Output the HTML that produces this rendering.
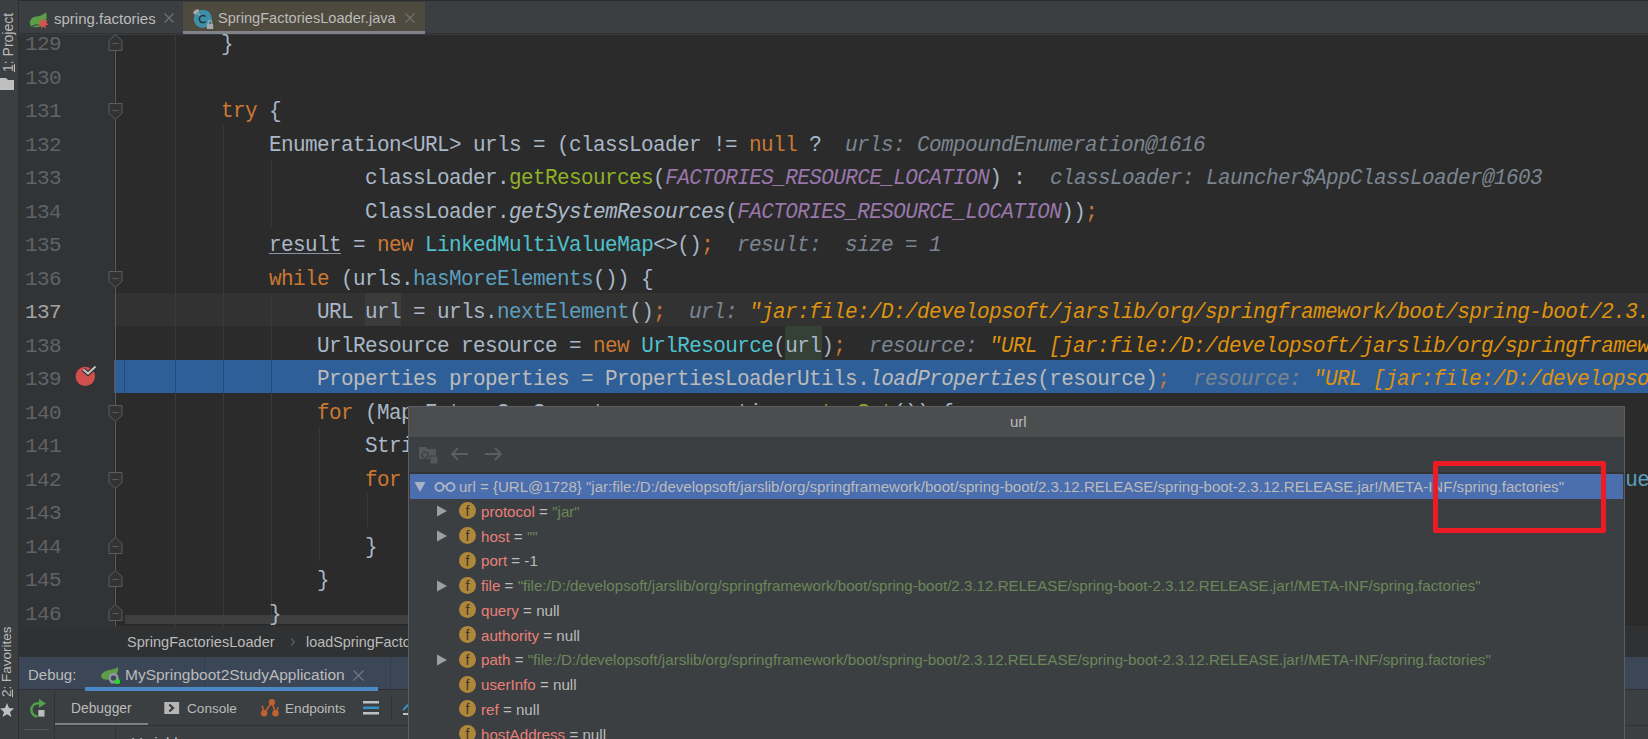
<!DOCTYPE html>
<html><head><meta charset="utf-8">
<style>
*{margin:0;padding:0;box-sizing:border-box}
html,body{width:1648px;height:739px;overflow:hidden;background:#2b2b2b}
body{position:relative;font-family:"Liberation Sans",sans-serif}
.abs{position:absolute}
.mono{font-family:"Liberation Mono",monospace;font-size:21px;letter-spacing:-0.6px;white-space:pre}
.ln{position:absolute;left:0;width:1648px;height:34px;line-height:40px}
.code{position:absolute;left:125px;top:0;color:#a9b7c6}
.hint{position:absolute;top:0}
.num{position:absolute;left:25px;top:0;color:#606366}
.num.cur{color:#a4a3a3}
.k{color:#cc7832}
.g{color:#8fb027}
.m{color:#5b9ebd}
.c{color:#4fc1cd}
.p{color:#9876aa;font-style:italic}
.i{font-style:italic}
.u{}
.w{color:#bbbbbb}
.wi{color:#bbbbbb;font-style:italic}
.hl1{}
.hl2{}
.hn{color:#7a8591;font-style:italic}
.hv{color:#7b8590;font-style:italic}
.hs{color:#df920f;font-style:italic}
.ui{font-family:"Liberation Sans",sans-serif;white-space:pre}
.vt{transform-origin:0 0;transform:rotate(-90deg);line-height:16px}
.fi{width:17px;height:17px;border-radius:50%;background:#ae873a;color:#3a3629;font-family:"Liberation Sans",sans-serif;font-size:14px;line-height:18px;text-align:center}
.prow{font-size:15.1px;line-height:19px}
.code,.hint{transform-origin:0 25px;transform:scaleY(1.04)}

</style></head><body>
<!-- left strip -->
<div class="abs" style="left:0;top:0;width:18px;height:739px;background:#3c3f41"></div>
<div class="abs" style="left:18px;top:0;width:1px;height:739px;background:#2d2f31"></div>
<div class="abs ui vt" style="left:0px;top:72px;color:#bbbbbb;font-size:14px;"><span style="text-decoration:underline">1</span>: Project</div>
<svg class="abs" style="left:0;top:77px" width="14" height="14" viewBox="0 0 14 14"><path d="M0 1 H6 L8 3 H14 V13 H0 Z" fill="#bfbfbf"/></svg>
<div class="abs ui vt" style="left:-1px;top:697px;color:#bbbbbb;font-size:13.5px;"><span style="text-decoration:underline">2</span>: Favorites</div>
<svg class="abs" style="left:0;top:702px" width="14" height="16" viewBox="0 0 14 16"><path d="M7 1 L9 6 L14 6.5 L10 10 L11.5 15 L7 12.3 L2.5 15 L4 10 L0 6.5 L5 6 Z" fill="#bfbfbf"/></svg>

<!-- tab bar -->
<div class="abs" style="left:19px;top:0;width:1629px;height:1px;background:#2b2b2b"></div>
<div class="abs" style="left:19px;top:1px;width:1629px;height:32px;background:#3c3f41"></div>
<div class="abs" style="left:19px;top:33px;width:1629px;height:1px;background:#2f3133"></div>
<div class="abs" style="left:19px;top:34px;width:1629px;height:1px;background:#393b3d"></div>
<!-- tab1 -->
<svg class="abs" style="left:26px;top:6px" width="26" height="26" viewBox="0 0 26 26"><path d="M20 6 C17.5 9.5 13 10 9 10.8 C4 12 3 17 4.5 19.5 C7 22.5 16 21.5 19 16.5 C21 13 21 9 20 6 Z" fill="#5a9e48"/><path d="M6 20.3 C9 18.7 12 18.4 15.5 18.2" stroke="#3c3f41" stroke-width="1.1" fill="none"/><path d="M17.30 11.90 L18.56 14.89 L21.68 14.01 L20.13 16.85 L22.76 18.75 L19.57 19.31 L19.73 22.55 L17.30 20.40 L14.87 22.55 L15.03 19.31 L11.84 18.75 L14.47 16.85 L12.92 14.01 L16.04 14.89 Z" fill="#d9534f"/></svg>
<div class="abs ui" style="left:54px;top:10px;font-size:15px;color:#bbbbbb">spring.factories</div>
<svg class="abs" style="left:164px;top:13px" width="10" height="10" viewBox="0 0 10 10"><path d="M0.5 0.5 L9.5 9.5 M9.5 0.5 L0.5 9.5" stroke="#6e7173" stroke-width="1.2"/></svg>
<!-- tab2 active -->
<div class="abs" style="left:183px;top:2px;width:242px;height:30px;background:#4e4a3e"></div>
<div class="abs" style="left:183px;top:31px;width:242px;height:3px;background:#80838a"></div>
<svg class="abs" style="left:192px;top:8px" width="24" height="22" viewBox="0 0 24 22"><circle cx="10.8" cy="10.8" r="9.1" fill="#3e90aa"/><path d="M13.6 8.6 A3.6 3.6 0 1 0 13.6 13.4" stroke="#25343a" stroke-width="1.5" fill="none"/><ellipse cx="4.2" cy="3.8" rx="3.2" ry="2" transform="rotate(-38 4.2 3.8)" fill="#a4aab0"/><path d="M6.3 5.8 L8.3 7.6" stroke="#a4aab0" stroke-width="1.2"/><rect x="14.9" y="16" width="6.3" height="5" fill="#a4aab0"/><path d="M16.2 16 V14 A1.8 1.8 0 0 1 19.8 14 V16" stroke="#a4aab0" stroke-width="1.1" fill="none"/></svg>
<div class="abs ui" style="left:218px;top:10px;font-size:14.6px;color:#bbbbbb">SpringFactoriesLoader.java</div>
<svg class="abs" style="left:405px;top:13px" width="10" height="10" viewBox="0 0 10 10"><path d="M0.5 0.5 L9.5 9.5 M9.5 0.5 L0.5 9.5" stroke="#6e7173" stroke-width="1.2"/></svg>

<!-- gutter -->
<div class="abs" style="left:19px;top:35px;width:95px;height:591px;background:#313335"></div>
<!-- caret row -->
<div class="abs" style="left:114px;top:293px;width:1534px;height:33px;background:#323232"></div>
<!-- execution line -->
<div class="abs" style="left:114px;top:360px;width:1534px;height:33px;background:#2f5f98"></div>
<!-- indent guides -->
<div class="abs" style="left:124px;top:360px;width:1px;height:33px;background:#254a78"></div>
<div class="abs" style="left:175px;top:35px;width:1px;height:591px;background:#393939"></div>
<div class="abs" style="left:223px;top:126px;width:1px;height:500px;background:#393939"></div>
<div class="abs" style="left:271px;top:160px;width:1px;height:66px;background:#393939"></div>
<div class="abs" style="left:271px;top:293px;width:1px;height:333px;background:#393939"></div>
<div class="abs" style="left:319px;top:427px;width:1px;height:134px;background:#393939"></div>
<div class="abs" style="left:367px;top:494px;width:1px;height:33px;background:#393939"></div>
<div class="abs" style="left:175px;top:360px;width:1px;height:33px;background:#254a78"></div>
<div class="abs" style="left:223px;top:360px;width:1px;height:33px;background:#254a78"></div>
<div class="abs" style="left:271px;top:360px;width:1px;height:33px;background:#254a78"></div>
<!-- word highlights -->
<div class="abs" style="left:269px;top:253px;width:72px;height:1px;background:#8a94a6;z-index:2"></div>
<div class="abs" style="left:365px;top:293px;width:36px;height:33px;background:#3b3b3b"></div>
<div class="abs" style="left:785px;top:326px;width:37px;height:34px;background:#344134"></div>
<!-- fold line -->
<div class="abs" style="left:115px;top:35px;width:1px;height:591px;background:#5a5c5e"></div>
<svg class="abs" style="left:108px;top:34.0px" width="15" height="18" viewBox="0 0 15 18"><path d="M1 6.5 L7.5 0.5 L14 6.5 L14 16.5 L1 16.5 Z" fill="#313335" stroke="#5a5c5e" stroke-width="1"/><path d="M4.5 9.5 H10.5" stroke="#5a5c5e" stroke-width="1"/></svg>
<svg class="abs" style="left:108px;top:103.0px" width="15" height="18" viewBox="0 0 15 18"><path d="M1 0.5 L14 0.5 L14 10.5 L7.5 16.5 L1 10.5 Z" fill="#313335" stroke="#5a5c5e" stroke-width="1"/><path d="M4.5 7.5 H10.5" stroke="#5a5c5e" stroke-width="1"/></svg>
<svg class="abs" style="left:108px;top:270.5px" width="15" height="18" viewBox="0 0 15 18"><path d="M1 0.5 L14 0.5 L14 10.5 L7.5 16.5 L1 10.5 Z" fill="#313335" stroke="#5a5c5e" stroke-width="1"/><path d="M4.5 7.5 H10.5" stroke="#5a5c5e" stroke-width="1"/></svg>
<svg class="abs" style="left:108px;top:404.5px" width="15" height="18" viewBox="0 0 15 18"><path d="M1 0.5 L14 0.5 L14 10.5 L7.5 16.5 L1 10.5 Z" fill="#313335" stroke="#5a5c5e" stroke-width="1"/><path d="M4.5 7.5 H10.5" stroke="#5a5c5e" stroke-width="1"/></svg>
<svg class="abs" style="left:108px;top:471.5px" width="15" height="18" viewBox="0 0 15 18"><path d="M1 0.5 L14 0.5 L14 10.5 L7.5 16.5 L1 10.5 Z" fill="#313335" stroke="#5a5c5e" stroke-width="1"/><path d="M4.5 7.5 H10.5" stroke="#5a5c5e" stroke-width="1"/></svg>
<svg class="abs" style="left:108px;top:536.5px" width="15" height="18" viewBox="0 0 15 18"><path d="M1 6.5 L7.5 0.5 L14 6.5 L14 16.5 L1 16.5 Z" fill="#313335" stroke="#5a5c5e" stroke-width="1"/><path d="M4.5 9.5 H10.5" stroke="#5a5c5e" stroke-width="1"/></svg>
<svg class="abs" style="left:108px;top:570.0px" width="15" height="18" viewBox="0 0 15 18"><path d="M1 6.5 L7.5 0.5 L14 6.5 L14 16.5 L1 16.5 Z" fill="#313335" stroke="#5a5c5e" stroke-width="1"/><path d="M4.5 9.5 H10.5" stroke="#5a5c5e" stroke-width="1"/></svg>
<svg class="abs" style="left:108px;top:603.5px" width="15" height="18" viewBox="0 0 15 18"><path d="M1 6.5 L7.5 0.5 L14 6.5 L14 16.5 L1 16.5 Z" fill="#313335" stroke="#5a5c5e" stroke-width="1"/><path d="M4.5 9.5 H10.5" stroke="#5a5c5e" stroke-width="1"/></svg>
<!-- breakpoint -->
<svg class="abs" style="left:74px;top:363px" width="24" height="24" viewBox="0 0 24 24"><circle cx="11.3" cy="13.4" r="9.7" fill="#cf4f4c"/><path d="M9.4 6.6 L14 10.6 L21.5 3.6" stroke="#2b2b2b" stroke-width="4.2" fill="none" stroke-linejoin="miter"/><path d="M9.4 6.6 L14 10.6 L21.5 3.6" stroke="#c4c4c4" stroke-width="2" fill="none"/></svg>

<!-- horizontal scrollbar -->
<div class="abs" style="left:125px;top:615px;width:900px;height:9px;background:#3f3f3f"></div>
<div class="ln mono" style="top:25.00px"><span class="num">129</span><span class="code">        }</span></div>
<div class="ln mono" style="top:58.50px"><span class="num">130</span><span class="code"></span></div>
<div class="ln mono" style="top:92.00px"><span class="num">131</span><span class="code">        <span class="k">try</span> {</span></div>
<div class="ln mono" style="top:125.50px"><span class="num">132</span><span class="code">            Enumeration&lt;URL&gt; urls = (classLoader != <span class="k">null</span> ?</span><span class="hint" style="left:845px"><span class="hn">urls: </span><span class="hv">CompoundEnumeration@1616</span></span></div>
<div class="ln mono" style="top:159.00px"><span class="num">133</span><span class="code">                    classLoader.<span class="g">getResources</span>(<span class="p">FACTORIES_RESOURCE_LOCATION</span>) :</span><span class="hint" style="left:1050px"><span class="hn">classLoader: </span><span class="hv">Launcher$AppClassLoader@1603</span></span></div>
<div class="ln mono" style="top:192.50px"><span class="num">134</span><span class="code">                    ClassLoader.<span class="i">getSystemResources</span>(<span class="p">FACTORIES_RESOURCE_LOCATION</span>))<span class="k">;</span></span></div>
<div class="ln mono" style="top:226.00px"><span class="num">135</span><span class="code">            <span class="u">result</span> = <span class="k">new</span> <span class="c">LinkedMultiValueMap</span>&lt;&gt;()<span class="k">;</span></span><span class="hint" style="left:737px"><span class="hn">result:  </span><span class="hv">size = 1</span></span></div>
<div class="ln mono" style="top:259.50px"><span class="num">136</span><span class="code">            <span class="k">while</span> (urls.<span class="m">hasMoreElements</span>()) {</span></div>
<div class="ln mono" style="top:293.00px"><span class="num cur">137</span><span class="code">                URL <span class="hl1">url</span> = urls.<span class="m">nextElement</span>()<span class="k">;</span></span><span class="hint" style="left:689px"><span class="hn">url: </span><span class="hs">"jar:file:/D:/developsoft/jarslib/org/springframework/boot/spring-boot/2.3.12.RELEASE/spring-boot-2.3.12.RELEASE.jar!/META-INF/spring.factories"</span></span></div>
<div class="ln mono" style="top:326.50px"><span class="num">138</span><span class="code">                UrlResource resource = <span class="k">new</span> <span class="c">UrlResource</span>(<span class="hl2">url</span>)<span class="k">;</span></span><span class="hint" style="left:869px"><span class="hn">resource: </span><span class="hs">"URL [jar:file:/D:/developsoft/jarslib/org/springframework/boot/spring-boot/2.3.12.RELEASE/spring-boot-2.3.12.RELEASE.jar!/META-INF/spring.factories]"</span></span></div>
<div class="ln mono" style="top:360.00px"><span class="num">139</span><span class="code"><span class="w">                Properties properties = PropertiesLoaderUtils.</span><span class="wi">loadProperties</span><span class="w">(resource)</span><span class="k">;</span></span><span class="hint" style="left:1193px"><span class="hn">resource: </span><span class="hs">"URL [jar:file:/D:/developsoft/jarslib/org/springframework/boot/spring-boot/2.3.12.RELEASE/spring-boot-2.3.12.RELEASE.jar!/META-INF/spring.factories]"</span></span></div>
<div class="ln mono" style="top:393.50px"><span class="num">140</span><span class="code">                <span class="k">for</span> (Map.Entry&lt;?, ?&gt; entry : properties.<span class="g">entrySet</span>()) {</span></div>
<div class="ln mono" style="top:427.00px"><span class="num">141</span><span class="code">                    String key = ((String) entry.<span class="g">getKey</span>()).<span class="g">trim</span>()<span class="k">;</span></span></div>
<div class="ln mono" style="top:460.50px"><span class="num">142</span><span class="code">                    <span class="k">for</span> (String factoryImplementationName : StringUtils.<span class="i">commaDelimitedListToStringArray</span>((String) entry.<span class="m">getValue</span>())) {</span></div>
<div class="ln mono" style="top:494.00px"><span class="num">143</span><span class="code">                        result.<span class="g">add</span>(factoryTypeName, factoryImplementationName.<span class="g">trim</span>())<span class="k">;</span></span></div>
<div class="ln mono" style="top:527.50px"><span class="num">144</span><span class="code">                    }</span></div>
<div class="ln mono" style="top:561.00px"><span class="num">145</span><span class="code">                }</span></div>
<div class="ln mono" style="top:594.50px"><span class="num">146</span><span class="code">            }</span></div>

<!-- breadcrumb bar -->
<div class="abs" style="left:19px;top:626px;width:1629px;height:1px;background:#323232"></div>
<div class="abs" style="left:19px;top:627px;width:1629px;height:30px;background:#303132"></div>
<div class="abs ui" style="left:127px;top:634px;font-size:14.6px;color:#bbbbbb">SpringFactoriesLoader</div>
<svg class="abs" style="left:290px;top:638px" width="6" height="8" viewBox="0 0 6 8"><path d="M1 0.5 L4.5 4 L1 7.5" stroke="#5d6063" stroke-width="1.1" fill="none"/></svg>
<div class="abs ui" style="left:306px;top:634px;font-size:14.4px;color:#bbbbbb">loadSpringFactories</div>

<!-- debug header -->
<div class="abs" style="left:19px;top:657px;width:1629px;height:32px;background:#3b4756"></div>
<div class="abs" style="left:204px;top:657px;width:1px;height:32px;background:#333e4a"></div>
<div class="abs" style="left:390px;top:657px;width:1px;height:32px;background:#333e4a"></div>
<div class="abs ui" style="left:28px;top:666px;font-size:15px;color:#bbbbbb">Debug:</div>
<svg class="abs" style="left:100px;top:666px" width="22" height="20" viewBox="0 0 22 20"><path d="M18 1 C14 4 8 3.5 4 6 C0 8.5 1 12 3 13 C6 14.5 12 14 15.5 10 C18 7 18.5 4 18 1 Z" fill="#5e9e48"/><path d="M9.5 8 L14 6.5 L18 9 L19 14 L15.5 17.5 L11 17.5 L8.5 13.5 Z" fill="#8f959b"/><circle cx="13.5" cy="12" r="2.6" fill="#3b4756"/><circle cx="17.5" cy="15.5" r="2.6" fill="#22dd22"/></svg>
<div class="abs ui" style="left:125px;top:666px;font-size:15.5px;color:#bbbbbb">MySpringboot2StudyApplication</div>
<svg class="abs" style="left:353px;top:670px" width="11" height="11" viewBox="0 0 11 11"><path d="M0.5 0.5 L10.5 10.5 M10.5 0.5 L0.5 10.5" stroke="#6e7681" stroke-width="1.2"/></svg>

<!-- debug toolbar -->
<div class="abs" style="left:19px;top:689px;width:1629px;height:1px;background:#2f3133"></div>
<div class="abs" style="left:19px;top:690px;width:1629px;height:49px;background:#3c3f41"></div>
<div class="abs" style="left:85px;top:687px;width:293px;height:4px;background:#4a88c7"></div>
<div class="abs" style="left:54px;top:691px;width:1px;height:48px;background:#323232"></div>
<svg class="abs" style="left:28px;top:699px" width="20" height="20" viewBox="0 0 20 20"><path d="M9.5 17.6 A6.7 6.7 0 0 1 8.6 4.4 L12.5 4.4" stroke="#4fa44a" stroke-width="2.4" fill="none"/><path d="M11 0 L18 4.4 L11 8.8 Z" fill="#4fa44a"/><rect x="10.3" y="11" width="6.2" height="6.6" fill="#bdbdbd"/></svg>
<div class="abs ui" style="left:71px;top:701px;font-size:13.8px;color:#bbbbbb">Debugger</div>
<div class="abs" style="left:55px;top:723px;width:93px;height:2px;background:#7d8185"></div>
<svg class="abs" style="left:164px;top:700px" width="16" height="16" viewBox="0 0 16 16"><rect x="0.3" y="2" width="14.8" height="12" fill="#b5b5b5"/><path d="M5.3 4.5 L9 8 L5.3 11.5" stroke="#393b3d" stroke-width="2.2" fill="none"/></svg>
<div class="abs ui" style="left:187px;top:701px;font-size:13.6px;color:#bbbbbb">Console</div>
<svg class="abs" style="left:260px;top:698px" width="22" height="22" viewBox="0 0 22 22"><path d="M4.1 15.3 L11.9 4.2 L15.5 15.3 M4.1 15.3 L2.3 7.8 M15.5 15.3 L18.2 9.2" stroke="#c0622b" stroke-width="1.5" fill="none"/><circle cx="11.9" cy="4.2" r="3.1" fill="#c0622b"/><circle cx="4.1" cy="15.3" r="3.2" fill="#c0622b"/><circle cx="15.5" cy="15.3" r="3.2" fill="#c0622b"/></svg>
<div class="abs ui" style="left:285px;top:701px;font-size:13.6px;color:#bbbbbb">Endpoints</div>
<svg class="abs" style="left:363px;top:700px" width="16" height="16" viewBox="0 0 16 16"><rect x="0" y="1" width="16" height="2.5" fill="#bfbfbf"/><rect x="0" y="6.5" width="16" height="2.5" fill="#3592c4"/><rect x="0" y="12" width="16" height="2.5" fill="#bfbfbf"/></svg>
<div class="abs" style="left:391px;top:696px;width:1px;height:24px;background:#323232"></div>
<svg class="abs" style="left:402px;top:700px" width="12" height="18" viewBox="0 0 12 18"><path d="M1 10 L8 3" stroke="#3592c4" stroke-width="2"/><rect x="1" y="13" width="8" height="2" fill="#bfbfbf"/></svg>
<div class="abs" style="left:55px;top:725px;width:1593px;height:1px;background:#323232"></div>
<div class="abs" style="left:24px;top:729px;width:25px;height:1px;background:#555555"></div>
<div class="abs" style="left:115px;top:726px;width:1px;height:13px;background:#323232"></div>

<div class="abs ui" style="left:132px;top:734px;font-size:15px;color:#bbbbbb">Variables</div>
<div class="abs" style="left:408px;top:406px;width:1217px;height:333px;background:#3c3f41;border:1px solid #5b5d5f;border-bottom:none"></div>
<div class="abs" style="left:409px;top:407px;width:1215px;height:30px;background:#4b4d4f"></div>
<div class="abs ui" style="left:1010px;top:413px;font-size:15px;color:#bbbbbb">url</div>
<svg class="abs" style="left:418px;top:445px" width="22" height="20" viewBox="0 0 22 20"><path d="M1 2 H8 L10 4 H18 V14 H1 Z" fill="#555759"/><circle cx="7" cy="10" r="3" fill="none" stroke="#3c3f41" stroke-width="1.2"/><rect x="12" y="11" width="8" height="8" fill="#555759" stroke="#3c3f41" stroke-width="1"/></svg>
<svg class="abs" style="left:450px;top:447px" width="20" height="14" viewBox="0 0 20 14"><path d="M2 7 H18 M8 1 L2 7 L8 13" stroke="#5c5f61" stroke-width="1.8" fill="none"/></svg>
<svg class="abs" style="left:483px;top:447px" width="20" height="14" viewBox="0 0 20 14"><path d="M2 7 H18 M12 1 L18 7 L12 13" stroke="#5c5f61" stroke-width="1.8" fill="none"/></svg>
<div class="abs" style="left:409px;top:472px;width:1215px;height:2px;background:#323436"></div>
<div class="abs" style="left:410px;top:474.00px;width:1213px;height:25px;background:#4b6eaf"></div>
<svg class="abs" style="left:414px;top:480.50px" width="12" height="12" viewBox="0 0 12 12"><path d="M0.5 1 H11.5 L6 11 Z" fill="#a7b3c4"/></svg>
<svg class="abs" style="left:434px;top:481.50px" width="22" height="10" viewBox="0 0 22 10"><circle cx="5.5" cy="5" r="4" fill="none" stroke="#a7b3c4" stroke-width="2"/><circle cx="16.5" cy="5" r="4" fill="none" stroke="#a7b3c4" stroke-width="2"/><path d="M9.5 4 H12.5" stroke="#a7b3c4" stroke-width="2"/></svg>
<div class="abs ui prow" style="left:459px;top:477.00px;font-size:15.05px"><span style="color:#bbbbbb">url</span><span style="color:#bbbbbb"> = </span><span style="color:#bbbbbb">{URL@1728} "jar:file:/D:/developsoft/jarslib/org/springframework/boot/spring-boot/2.3.12.RELEASE/spring-boot-2.3.12.RELEASE.jar!/META-INF/spring.factories"</span></div>
<svg class="abs" style="left:436px;top:505.25px" width="12" height="12" viewBox="0 0 12 12"><path d="M1 0.5 L11 6 L1 11.5 Z" fill="#9d9fa1"/></svg>
<div class="abs fi" style="left:459px;top:502.25px">f</div>
<div class="abs ui prow" style="left:481px;top:501.75px;font-size:15.15px"><span style="color:#e77f7a">protocol</span><span style="color:#bbbbbb"> = </span><span style="color:#6a8759">"jar"</span></div>
<svg class="abs" style="left:436px;top:530.00px" width="12" height="12" viewBox="0 0 12 12"><path d="M1 0.5 L11 6 L1 11.5 Z" fill="#9d9fa1"/></svg>
<div class="abs fi" style="left:459px;top:527.00px">f</div>
<div class="abs ui prow" style="left:481px;top:526.50px;font-size:15.15px"><span style="color:#e77f7a">host</span><span style="color:#bbbbbb"> = </span><span style="color:#6a8759">""</span></div>
<div class="abs fi" style="left:459px;top:551.75px">f</div>
<div class="abs ui prow" style="left:481px;top:551.25px;font-size:15.15px"><span style="color:#e77f7a">port</span><span style="color:#bbbbbb"> = </span><span style="color:#bbbbbb">-1</span></div>
<svg class="abs" style="left:436px;top:579.50px" width="12" height="12" viewBox="0 0 12 12"><path d="M1 0.5 L11 6 L1 11.5 Z" fill="#9d9fa1"/></svg>
<div class="abs fi" style="left:459px;top:576.50px">f</div>
<div class="abs ui prow" style="left:481px;top:576.00px;font-size:15.15px"><span style="color:#e77f7a">file</span><span style="color:#bbbbbb"> = </span><span style="color:#6a8759">"file:/D:/developsoft/jarslib/org/springframework/boot/spring-boot/2.3.12.RELEASE/spring-boot-2.3.12.RELEASE.jar!/META-INF/spring.factories"</span></div>
<div class="abs fi" style="left:459px;top:601.25px">f</div>
<div class="abs ui prow" style="left:481px;top:600.75px;font-size:15.15px"><span style="color:#e77f7a">query</span><span style="color:#bbbbbb"> = </span><span style="color:#bbbbbb">null</span></div>
<div class="abs fi" style="left:459px;top:626.00px">f</div>
<div class="abs ui prow" style="left:481px;top:625.50px;font-size:15.15px"><span style="color:#e77f7a">authority</span><span style="color:#bbbbbb"> = </span><span style="color:#bbbbbb">null</span></div>
<svg class="abs" style="left:436px;top:653.75px" width="12" height="12" viewBox="0 0 12 12"><path d="M1 0.5 L11 6 L1 11.5 Z" fill="#9d9fa1"/></svg>
<div class="abs fi" style="left:459px;top:650.75px">f</div>
<div class="abs ui prow" style="left:481px;top:650.25px;font-size:15.15px"><span style="color:#e77f7a">path</span><span style="color:#bbbbbb"> = </span><span style="color:#6a8759">"file:/D:/developsoft/jarslib/org/springframework/boot/spring-boot/2.3.12.RELEASE/spring-boot-2.3.12.RELEASE.jar!/META-INF/spring.factories"</span></div>
<div class="abs fi" style="left:459px;top:675.50px">f</div>
<div class="abs ui prow" style="left:481px;top:675.00px;font-size:15.15px"><span style="color:#e77f7a">userInfo</span><span style="color:#bbbbbb"> = </span><span style="color:#bbbbbb">null</span></div>
<div class="abs fi" style="left:459px;top:700.25px">f</div>
<div class="abs ui prow" style="left:481px;top:699.75px;font-size:15.15px"><span style="color:#e77f7a">ref</span><span style="color:#bbbbbb"> = </span><span style="color:#bbbbbb">null</span></div>
<div class="abs fi" style="left:459px;top:725.00px">f</div>
<div class="abs ui prow" style="left:481px;top:724.50px;font-size:15.15px"><span style="color:#e77f7a">hostAddress</span><span style="color:#bbbbbb"> = </span><span style="color:#bbbbbb">null</span></div>
<div class="abs" style="left:1433px;top:461px;width:173px;height:72px;border:5px solid #ed1c24;border-radius:2px"></div>

</body></html>
